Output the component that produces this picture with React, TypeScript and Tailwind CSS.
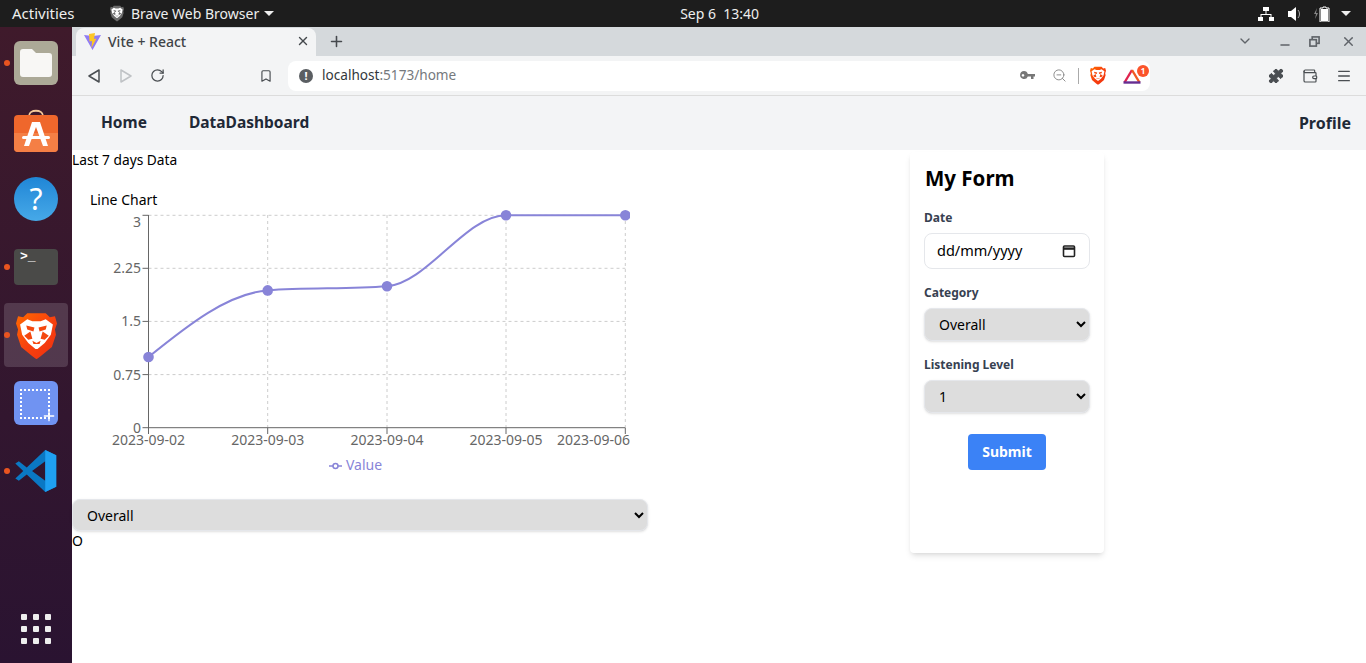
import {
  Bookmark,
  ChevronDown,
  Menu,
  Minus,
  Plus,
  Puzzle,
  RotateCw,
  Wallet,
  X,
  ZoomOut,
} from "lucide-react";
import type { ReactNode } from "react";

const LION_SHIELD =
  "M11 2 L29 2 L33 6 L38 5 L40 12 L38 18 L39 23 L35 35 L24 44 L20 47 L16 44 L5 35 L1 23 L2 18 L0 12 L2 5 L7 6 Z";

function BraveLion({ size, mono = false }: { size: number; mono?: boolean }) {
  const eye = mono ? "#6b6b6b" : "#f4480f";
  return (
    <svg width={size} height={size * 1.18} viewBox="0 0 40 47">
      <defs>
        <linearGradient id="lionShield" x1="0" y1="0" x2="1" y2="1">
          <stop offset="0" stopColor="#ff6a00" />
          <stop offset="0.5" stopColor="#f8420e" />
          <stop offset="1" stopColor="#ee2f10" />
        </linearGradient>
      </defs>
      <path d={LION_SHIELD} fill={mono ? "#6b6b6b" : "url(#lionShield)"} />
      <path d="M4 13 L11 8 L16 10 H24 L29 8 L36 13 L34 23 L28 31 L21 37 H19 L12 31 L6 23 Z" fill="#fff" />
      <path d="M10 14 L18 16 L17 20 L11 18 Z M30 14 L22 16 L23 20 L29 18 Z" fill={eye} />
      <path d="M8 24 L14 20 L16 27 L12 28 Z M32 24 L26 20 L24 27 L28 28 Z" fill={eye} />
      <path d="M16 29 L20 31 L24 29 L23 32 H17 Z" fill={eye} />
    </svg>
  );
}

function DockSlot({ running, active, children }: { running?: boolean; active?: boolean; children: ReactNode }) {
  return (
    <div className="relative flex h-[68px] w-[72px] items-center justify-center">
      {active && <div className="absolute left-1 top-[2px] h-16 w-16 rounded bg-white/15" />}
      {running && <div className="absolute left-[4px] top-[31px] h-[6px] w-[6px] rounded-full bg-[#e95420]" />}
      <div className="relative flex items-center justify-center">{children}</div>
    </div>
  );
}

function Dock() {
  return (
    <aside className="flex w-[72px] shrink-0 flex-col bg-gradient-to-b from-[#3f1a2b] to-[#2a1331] pt-[2px]">
      <DockSlot running>
        <div className="flex h-[44px] w-[44px] items-center justify-center rounded-md bg-[#aca997]">
          <svg width="32" height="28" viewBox="0 0 32 28">
            <path d="M0 3 a3 3 0 0 1 3-3 h9 l4 4 h13 a3 3 0 0 1 3 3 v18 a3 3 0 0 1-3 3 H3 a3 3 0 0 1-3-3 Z" fill="#f8f7f5" />
          </svg>
        </div>
      </DockSlot>
      <DockSlot>
        <svg width="44" height="44" viewBox="0 0 44 44">
          <path d="M15 7 C15 0 29 0 29 7" fill="none" stroke="#f4c99a" strokeWidth="1.8" />
          <rect x="0" y="6" width="44" height="37" rx="4" fill="#ef672c" />
          <path d="M0 24 H44 V39 a4 4 0 0 1-4 4 H4 a4 4 0 0 1-4-4 Z" fill="#f47f45" />
          <path d="M18 13 h8 L34 37 h-5 L22 18 L15 37 h-5 Z" fill="#fff" />
          <rect x="8" y="27" width="28" height="3" rx="1.5" fill="#fff" />
        </svg>
      </DockSlot>
      <DockSlot>
        <div className="flex h-[44px] w-[44px] items-center justify-center rounded-full bg-gradient-to-b from-[#1f86d6] to-[#46a9e8] text-[30px] leading-none text-white">
          ?
        </div>
      </DockSlot>
      <DockSlot running>
        <div className="h-[36px] w-[44px] rounded bg-[#4a4a48] px-[6px] pt-[1px] font-['Liberation_Mono',monospace] text-[13px] font-bold leading-[14px] text-white">
          &gt;_
        </div>
      </DockSlot>
      <DockSlot running active>
        <BraveLion size={41} />
      </DockSlot>
      <DockSlot>
        <div className="relative h-[44px] w-[44px] rounded-md bg-[#7093f2]">
          <div className="absolute left-[6px] top-[8px] h-[30px] w-[30px] border-2 border-dotted border-white" />
          <Plus className="absolute bottom-[1px] right-[1px] text-white" size={16} strokeWidth={2} />
        </div>
      </DockSlot>
      <DockSlot running>
        <svg width="44" height="44" viewBox="0 0 100 100">
          <path
            fillRule="evenodd"
            d="M96 14 L71 2 L29 42 L11 28 L3 33 L21 50 L3 67 L11 72 L29 58 L71 98 L96 86 Z M71 28 L41 50 L71 72 Z"
            fill="#0a78c4"
          />
          <path d="M71 2 L96 14 V86 L71 98 Z" fill="#1fa0f2" />
        </svg>
      </DockSlot>
      <div className="mb-[19px] mt-auto grid grid-cols-3 gap-[6px] self-center">
        {Array.from({ length: 9 }).map((_, i) => (
          <div key={i} className="h-[6px] w-[6px] rounded-[1px] bg-[#eeeeee]" />
        ))}
      </div>
    </aside>
  );
}

function TopBar() {
  return (
    <header className="flex h-[27px] shrink-0 items-center bg-[#1d1d1d] text-[14px] text-[#eeeeee]">
      <span className="ml-3 w-[98px] text-[15px]">Activities</span>
      <BraveLion size={14} mono />
      <span className="ml-[7px]">Brave Web Browser</span>
      <span className="ml-[5px] h-0 w-0 border-x-[5px] border-t-[5px] border-x-transparent border-t-[#eeeeee]" />
      <span className="ml-[406px]">Sep 6&nbsp;&nbsp;13:40</span>
      <div className="ml-auto mr-[15px] flex items-center">
        <svg width="16" height="14" viewBox="0 0 16 14" fill="#fff">
          <rect x="5" y="0" width="6" height="4" />
          <rect x="0" y="10" width="5" height="4" />
          <rect x="11" y="10" width="5" height="4" />
          <path d="M7.5 4 h1 v3 h5 v3 h-1 v-2 h-9 v2 h-1 v-3 h5 Z" />
        </svg>
        <svg className="ml-[14px]" width="15" height="14" viewBox="0 0 15 14" fill="#fff">
          <path d="M0 4 h3 l5-4 v14 l-5-4 H0 Z" />
          <path d="M10 3 a6 6 0 0 1 0 8" fill="none" stroke="#aaa" strokeWidth="1" />
        </svg>
        <svg className="ml-[11px]" width="16" height="16" viewBox="0 0 16 16">
          <path d="M3 2 L0 8 h2 l-1 5 L4 7 H2 Z" fill="#888" />
          <path d="M9 1 h3 v1 h3 v14 H6 V2 h3 Z" fill="none" stroke="#fff" strokeWidth="1" />
          <rect x="7" y="3" width="7" height="12" fill="#fff" />
        </svg>
        <span className="ml-[11px] h-0 w-0 border-x-[5px] border-t-[5px] border-x-transparent border-t-[#eeeeee]" />
      </div>
    </header>
  );
}

function ViteIcon() {
  return (
    <svg width="17" height="17" viewBox="0 0 17 17">
      <path d="M0 2 L8.5 3 L17 2 L8.5 17 Z" fill="#8f7bf5" />
      <path d="M5 1 L11 0 L10 6 L12.5 5.5 L7.5 15 L8 8 L5.5 8.5 Z" fill="#fdc625" />
    </svg>
  );
}

function BrowserChrome() {
  return (
    <div className="shrink-0">
      <div className="flex h-[29px] items-end bg-[#d5d9dc] text-[#45494d]">
        <div className="ml-1 flex h-[28px] w-[240px] items-center rounded-t-lg bg-[#f3f4f5] pb-[2px] pl-2 pr-[6px]">
          <ViteIcon />
          <span className="ml-[7px] text-[14px] font-medium text-[#3f4347]">Vite + React</span>
          <X className="ml-auto" size={14} strokeWidth={2.4} />
        </div>
        <Plus className="mb-[6px] ml-[12px]" size={17} strokeWidth={2.2} />
        <div className="mb-[7px] ml-auto mr-[10px] flex items-center text-[#5f6368]">
          <ChevronDown size={16} strokeWidth={2} />
          <Minus className="ml-[25px] translate-y-[4px]" size={14} strokeWidth={2.2} />
          <svg className="ml-[17px]" width="11" height="11" viewBox="0 0 12 12" fill="none" stroke="currentColor" strokeWidth="1.8">
            <rect x="3.5" y="1" width="7.5" height="7" />
            <rect x="1" y="4" width="7" height="7" fill="#d5d9dc" />
          </svg>
          <X className="ml-[21px]" size={15} strokeWidth={2.2} />
        </div>
      </div>
      <div className="flex h-[40px] items-center border-b border-[#dcdcdc] bg-[#f3f4f5] text-[#4a4e52]">
        <div className="flex w-[216px] items-center pl-[16px]">
          <svg width="12" height="14" viewBox="0 0 12 14" fill="none" stroke="#4a4e52" strokeWidth="1.5" strokeLinejoin="round">
            <path d="M11 1 V13 L1 7 Z" />
          </svg>
          <svg className="ml-[20px]" width="12" height="14" viewBox="0 0 12 14" fill="none" stroke="#bfc2c5" strokeWidth="1.5" strokeLinejoin="round">
            <path d="M1 1 V13 L11 7 Z" />
          </svg>
          <RotateCw className="ml-[18px]" size={15} strokeWidth={2} />
          <Bookmark className="ml-[94px]" size={14} strokeWidth={2} />
        </div>
        <div className="flex h-[30px] w-[862px] items-center rounded-lg bg-white text-[14px]">
          <div className="ml-[11px] flex h-[14px] w-[14px] items-center justify-center rounded-full bg-[#5a5e62] text-[11px] font-bold leading-none text-white">
            !
          </div>
          <span className="ml-[9px] text-[13.6px] text-[#33373b]">localhost</span>
          <span className="text-[13.6px] text-[#75797d]">:5173/home</span>
          <div className="ml-auto flex items-center pr-[9px]">
            <svg width="15" height="9" viewBox="0 0 15 9" fill="#777">
              <path d="M4 0 a4 4 0 0 1 3.8 3 H15 V5.5 H13.5 V8 H11 V5.5 H7.8 A4 4 0 1 1 4 0 Z M3 3 a1.3 1.3 0 1 0 .01 0 Z" fillRule="evenodd" />
            </svg>
            <ZoomOut className="ml-[17px] text-[#888]" size={15} strokeWidth={1.5} />
            <div className="ml-[11px] h-[16px] w-px bg-[#aaa]" />
            <div className="ml-[11px]">
              <BraveLion size={16} />
            </div>
            <div className="relative ml-[17px] h-[16px] w-[18px]">
              <svg width="18" height="16" viewBox="0 0 18 16" fill="none" strokeWidth="2.4">
                <path d="M9 2 L1.5 14.5" stroke="#e0234f" />
                <path d="M9 2 L16.5 14.5" stroke="#f15a22" />
                <path d="M0.5 14.5 H17.5" stroke="#662d91" />
              </svg>
              <div className="absolute -right-[8px] -top-[3px] flex h-[12px] w-[12px] items-center justify-center rounded-full bg-[#fb542b] text-[8px] font-bold leading-none text-white">
                1
              </div>
            </div>
          </div>
        </div>
        <div className="ml-auto mr-[14px] flex items-center gap-[18px]">
          <Puzzle size={16} fill="#4a4e52" strokeWidth={1.5} />
          <Wallet size={16} strokeWidth={1.8} />
          <Menu size={16} strokeWidth={2} />
        </div>
      </div>
    </div>
  );
}

const POINTS = [
  { x: 148.5, y: 357, label: "2023-09-02", anchor: 148.5 },
  { x: 267.7, y: 290.4, label: "2023-09-03", anchor: 267.7 },
  { x: 387, y: 286.3, label: "2023-09-04", anchor: 387 },
  { x: 506, y: 215.3, label: "2023-09-05", anchor: 506 },
  { x: 625.3, y: 215.3, label: "2023-09-06", anchor: 593.5 },
];

const Y_TICKS = [
  { y: 215.3, label: "3" },
  { y: 268.3, label: "2.25" },
  { y: 321.4, label: "1.5" },
  { y: 374.6, label: "0.75" },
  { y: 427.7, label: "0" },
];

function LineChart() {
  // svg starts at page x=90, y=208
  const ox = 90;
  const oy = 208;
  const curve = `M${148.5 - ox} ${357 - oy} C${188 - ox} ${325 - oy} ${228 - ox} ${293.4 - oy} ${267.7 - ox} ${290.4 - oy} C${307 - ox} ${287.4 - oy} ${347 - ox} ${289.3 - oy} ${387 - ox} ${286.3 - oy} C${427 - ox} ${283.3 - oy} ${466 - ox} ${215.3 - oy} ${506 - ox} ${215.3 - oy} L${625.3 - ox} ${215.3 - oy}`;
  return (
    <svg width="540" height="272" className="block text-[14px]">
      {Y_TICKS.slice(0, 4).map((t) => (
        <line key={t.y} x1={148.5 - ox} x2={625.3 - ox} y1={t.y - oy} y2={t.y - oy} stroke="#ccc" strokeDasharray="3 3" />
      ))}
      {POINTS.slice(1).map((p) => (
        <line key={p.x} x1={p.x - ox} x2={p.x - ox} y1={215 - oy} y2={428 - oy} stroke="#ccc" strokeDasharray="3 3" />
      ))}
      <line x1={148.5 - ox} x2={148.5 - ox} y1={215 - oy} y2={428 - oy} stroke="#666" />
      <line x1={148.5 - ox} x2={625.3 - ox} y1={427.7 - oy} y2={427.7 - oy} stroke="#666" />
      {Y_TICKS.map((t) => (
        <g key={t.label}>
          <line x1={142.5 - ox} x2={148.5 - ox} y1={t.y - oy} y2={t.y - oy} stroke="#666" />
          <text x={141 - ox} y={t.y - oy + (t.label === "3" ? 12 : 5)} textAnchor="end" fill="#666">
            {t.label}
          </text>
        </g>
      ))}
      {POINTS.map((p) => (
        <g key={p.label}>
          <line x1={p.x - ox} x2={p.x - ox} y1={428 - oy} y2={434 - oy} stroke="#666" />
          <text x={p.anchor - ox} y={445 - oy} textAnchor="middle" fill="#666">
            {p.label}
          </text>
        </g>
      ))}
      <path d={curve} fill="none" stroke="#8884d8" strokeWidth="2" />
      {POINTS.map((p) => (
        <circle key={p.x} cx={p.x - ox} cy={p.y - oy} r="5.3" fill="#8884d8" />
      ))}
      <line x1={329 - ox} x2={342 - ox} y1={466 - oy} y2={466 - oy} stroke="#8884d8" strokeWidth="1.5" />
      <circle cx={335.5 - ox} cy={466 - oy} r="2.5" fill="#fff" stroke="#8884d8" strokeWidth="1.5" />
      <text x={346 - ox} y={470 - oy} fill="#8884d8">
        Value
      </text>
    </svg>
  );
}

function MyForm() {
  const labelCls = "block text-[12px] font-bold leading-4 text-[#374151]";
  const selectCls =
    "block h-[33px] w-full rounded-lg border border-[#e5e7eb] bg-[#dddddd] px-[10px] text-[14px] text-black shadow-sm";
  return (
    <form className="mt-[2px] flex h-[401px] w-[194px] shrink-0 flex-col rounded bg-white px-[14px] pt-[14px] shadow-md">
      <h2 className="pl-px text-[20.5px] font-bold leading-[24px] text-black">My Form</h2>
      <label className={`${labelCls} mt-[20px]`}>Date</label>
      <div className="mt-[7px] flex h-[36px] w-full items-center justify-between rounded-lg border border-[#e5e7eb] bg-white pl-3 pr-[13px] text-[14.5px] text-black">
        <span>dd/mm/yyyy</span>
        <svg width="14" height="14" viewBox="0 0 14 14" fill="none" stroke="#222" strokeWidth="1.6">
          <rect x="1.5" y="2" width="11" height="10.5" rx="1" />
          <path d="M1.5 4.6 H12.5" strokeWidth="2.4" />
        </svg>
      </div>
      <label className={`${labelCls} mt-[16px]`}>Category</label>
      <select className={`${selectCls} mt-[7px]`} defaultValue="Overall">
        <option>Overall</option>
      </select>
      <label className={`${labelCls} mt-[16px]`}>Listening Level</label>
      <select className={`${selectCls} mt-[7px]`} defaultValue="1">
        <option>1</option>
      </select>
      <button type="button" className="mt-[21px] h-[36px] w-[78px] self-center rounded bg-[#3b82f6] pb-[2px] text-[14px] font-bold text-white">
        Submit
      </button>
    </form>
  );
}

export default function App() {
  return (
    <div className="flex h-screen w-full flex-col overflow-hidden bg-white font-['Noto_Sans',sans-serif]">
      <TopBar />
      <div className="flex min-h-0 flex-1">
        <Dock />
        <div className="flex min-w-0 flex-1 flex-col">
          <BrowserChrome />
          <nav className="flex h-[54px] shrink-0 items-center bg-[#f3f4f6] pl-[29px] pr-[15px] text-[15.5px] font-bold text-[#1f2937]">
            <a>Home</a>
            <a className="ml-[42px]">DataDashboard</a>
            <a className="ml-auto text-[16px]">Profile</a>
          </nav>
          <main className="flex flex-1 items-start text-[14px] text-black">
            <section className="w-[576px] shrink-0">
              <p className="h-[20px] text-[13.75px] leading-5">Last 7 days Data</p>
              <p className="mt-5 h-[20px] pl-[18px] leading-5">Line Chart</p>
              <div className="-mt-[2px] pl-[18px]">
                <LineChart />
              </div>
              <select
                className="mt-[19px] block h-[32px] w-full rounded-lg border border-[#e5e7eb] bg-[#dddddd] px-[10px] text-[14px] text-black shadow-sm"
                defaultValue="Overall"
              >
                <option>Overall</option>
              </select>
              <p className="leading-5">O</p>
            </section>
            <div className="ml-[262px]">
              <MyForm />
            </div>
          </main>
        </div>
      </div>
    </div>
  );
}
